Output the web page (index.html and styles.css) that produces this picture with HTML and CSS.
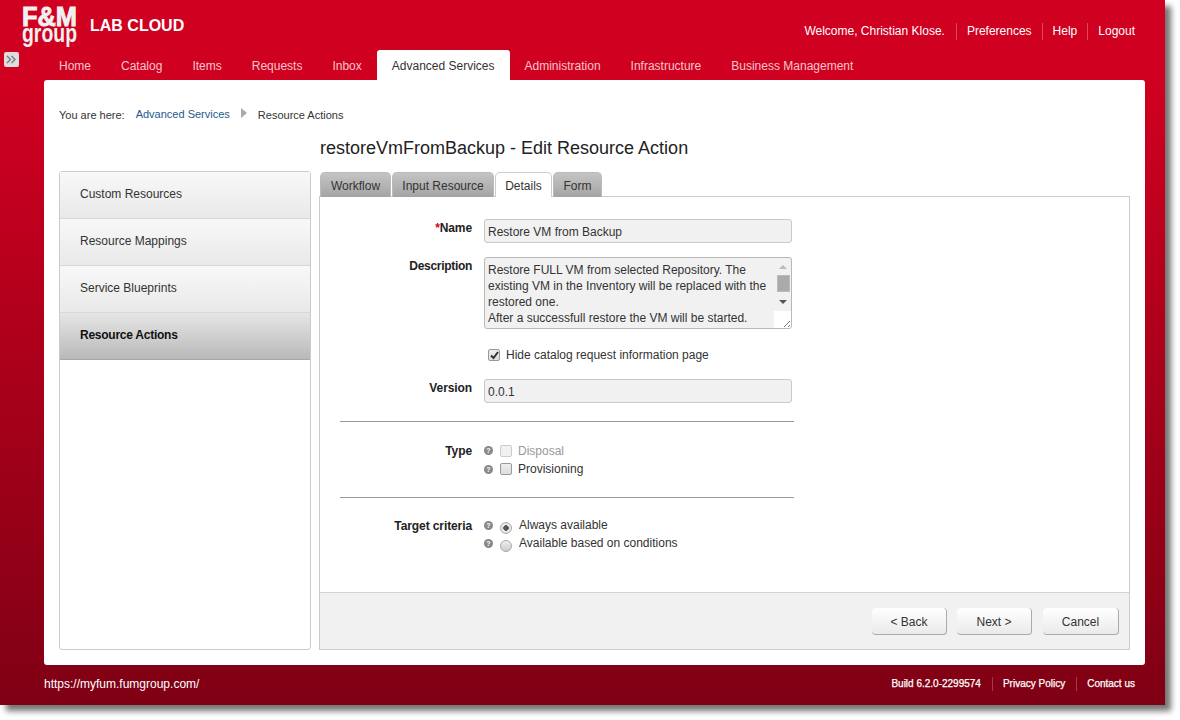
FILE: index.html
```html
<!DOCTYPE html>
<html>
  <head>
    <meta charset="utf-8">
    <title>restoreVmFromBackup - Edit Resource Action</title>
    <link rel="stylesheet" href="styles.css">
  </head>
  <body>
    <div class="window">
      <div class="top">
        <svg class="logo" width="56" height="46" viewBox="0 0 56 46">
          <text class="logo-fm" x="0" y="23" textLength="55" lengthAdjust="spacingAndGlyphs">F&amp;M</text>
          <text class="logo-group" x="0" y="39" textLength="55" lengthAdjust="spacingAndGlyphs">group</text>
        </svg>
        <div class="brand">LAB CLOUD</div>
        <ul class="user">
          <li>Welcome, Christian Klose.</li>
          <li>Preferences</li>
          <li>Help</li>
          <li>Logout</li>
        </ul>
      </div>
      <div class="expander">
        <svg width="11" height="9" viewBox="0 0 11 9"><path d="M1 1l3.500 3.500-3.500 3.500M5.500 1l3.500 3.500-3.500 3.500" fill="none" stroke="#777" stroke-width="1.300"/></svg>
      </div>
      <ul class="nav">
        <li>Home</li>
        <li>Catalog</li>
        <li>Items</li>
        <li>Requests</li>
        <li>Inbox</li>
        <li class="current">Advanced Services</li>
        <li>Administration</li>
        <li>Infrastructure</li>
        <li>Business Management</li>
      </ul>
      <div class="panel">
        <div class="crumbs">
          <span>You are here:</span>
          <a href="#">Advanced Services</a>
          <i class="crumb-arrow"></i>
          <span>Resource Actions</span>
        </div>
        <div class="columns">
          <div class="side-col">
            <ul class="side">
              <li>Custom Resources</li>
              <li>Resource Mappings</li>
              <li>Service Blueprints</li>
              <li class="current">Resource Actions</li>
            </ul>
          </div>
          <div class="main">
            <h1>restoreVmFromBackup - Edit Resource Action</h1>
            <ul class="tabs">
              <li class="t1">Workflow</li>
              <li class="t2">Input Resource</li>
              <li class="t3 current">Details</li>
              <li class="t4">Form</li>
            </ul>
            <div class="box">
              <div class="form">
                <div class="row row-name">
                  <label><b class="req">*</b>Name</label>
                  <div class="field">Restore VM from Backup</div>
                </div>
                <div class="row row-desc">
                  <label>Description</label>
                  <div class="area">
                    <div class="area-text">Restore FULL VM from selected Repository. The existing VM in the Inventory will be replaced with the restored one.<br>After a successfull restore the VM will be started.</div>
                    <div class="scroll">
                      <i class="up"></i>
                      <i class="thumb"></i>
                      <i class="down"></i>
                      <div class="grip">
                        <svg width="8" height="8" viewBox="0 0 8 8"><path d="M1 7l6-6M5 7l2-2" stroke="#777" fill="none"/></svg>
                      </div>
                    </div>
                  </div>
                </div>
                <div class="row row-hide">
                  <label></label>
                  <span class="check checked">
                    <svg width="9" height="9" viewBox="0 0 9 9"><path d="M1 4.500l2.500 2.500 4.500-6" stroke="#333" stroke-width="2" fill="none"/></svg>
                  </span>
                  <span>Hide catalog request information page</span>
                </div>
                <div class="row row-version">
                  <label>Version</label>
                  <div class="field">0.0.1</div>
                </div>
                <hr class="rule rule-one">
                <div class="row row-opt row-type">
                  <label>Type</label>
                  <i class="help">?</i>
                  <span class="check disabled"></span>
                  <span class="muted">Disposal</span>
                </div>
                <div class="row row-opt">
                  <label></label>
                  <i class="help">?</i>
                  <span class="check"></span>
                  <span>Provisioning</span>
                </div>
                <hr class="rule rule-two">
                <div class="row row-opt row-target">
                  <label>Target criteria</label>
                  <i class="help">?</i>
                  <span class="radio on"></span>
                  <span class="radio-label">Always available</span>
                </div>
                <div class="row row-opt">
                  <label></label>
                  <i class="help help-up">?</i>
                  <span class="radio"></span>
                  <span class="radio-label">Available based on conditions</span>
                </div>
              </div>
              <div class="actions">
                <button>&lt; Back</button>
                <button>Next &gt;</button>
                <button class="cancel">Cancel</button>
              </div>
            </div>
          </div>
        </div>
      </div>
      <div class="bottom">
        <span class="url">https://myfum.fumgroup.com/</span>
        <ul class="legal">
          <li>Build 6.2.0-2299574</li>
          <li>Privacy Policy</li>
          <li>Contact us</li>
        </ul>
      </div>
    </div>
  </body>
</html>
```
FILE: styles.css
```css
html, body {
  margin: 0;
  padding: 0;
  background-color: #fff;
  height: 100%;
  overflow: hidden;
}
body {
  font-family: "Liberation Sans", Arial, sans-serif;
  font-size: 12px;
  color: #333;
}
ul {
  list-style: none;
  margin: 0;
  padding: 0;
}
.window {
  position: relative;
  width: 1165px;
  height: 705px;
  display: flex;
  flex-direction: column;
  background: linear-gradient(#d00020 0, #d00020 80px, #7f0014 100%);
  box-shadow: 6px 6px 6px rgba(0, 0, 0, .55);
}
.top {
  height: 50px;
  display: flex;
  align-items: flex-start;
  padding: 0 30px 0 22px;
  color: #fff;
}
.logo {
  flex: none;
  margin-top: 3px;
  overflow: visible;
  fill: #f0f0f0;
  font-weight: bold;
}
.logo-fm {
  font-size: 28.500px;
  stroke: #f0f0f0;
  stroke-width: 1px;
}
.logo-group {
  font-size: 25px;
}
.brand {
  margin: 17px 0 0 12px;
  font-size: 16px;
  line-height: 18px;
  font-weight: bold;
}
.user {
  margin: 23px 0 0 auto;
  display: flex;
  line-height: 17px;
}
.user li {
  padding: 0 10px;
  border-left: 1px solid #e0445a;
}
.user li:first-child {
  border-left: 0;
  padding-right: 11px;
}
.user li:last-child {
  padding-right: 0;
}
.expander {
  position: absolute;
  left: 4px;
  top: 52px;
  width: 15px;
  height: 15px;
  display: flex;
  align-items: center;
  justify-content: center;
  background: #ddd;
  border-radius: 2px;
}
.nav {
  height: 30px;
  display: flex;
  padding-left: 44px;
  line-height: 32px;
  color: #f7c6cd;
}
.nav li {
  padding: 0 15px;
}
.nav .current {
  background: #fff;
  color: #333;
  border-radius: 3px 3px 0 0;
}
.panel {
  width: 1101px;
  height: 585px;
  box-sizing: border-box;
  margin-left: 44px;
  padding: 0 15px 15px;
  display: flex;
  flex-direction: column;
  background: #fff;
  border-radius: 3px;
}
.crumbs {
  height: 48px;
  padding-top: 28px;
  box-sizing: border-box;
  display: flex;
  font-size: 11px;
  line-height: 14px;
}
.crumbs a {
  margin: -1px 0 0 11px;
  color: #1d5a8c;
  text-decoration: none;
}
.crumb-arrow {
  width: 0;
  height: 0;
  margin: 0 11px;
  border-left: 6px solid #aaa;
  border-top: 5px solid transparent;
  border-bottom: 5px solid transparent;
}
.columns {
  flex: 1;
  display: flex;
  gap: 8px;
  min-height: 0;
}
.side-col {
  width: 252px;
  margin-top: 43px;
  box-sizing: border-box;
  border: 1px solid #ccc;
  border-radius: 3px;
}
.side li {
  height: 47px;
  box-sizing: border-box;
  padding-left: 20px;
  line-height: 44px;
  background: linear-gradient(#f8f8f8, #e9e9e9);
  border-bottom: 1px solid #d8d8d8;
}
.side .current {
  background: linear-gradient(#e6e6e6, #b9b9b9);
  border-bottom-color: #a8a8a8;
  color: #111;
  font-weight: bold;
  letter-spacing: -.25px;
}
.main {
  flex: 1;
  display: flex;
  flex-direction: column;
}
h1 {
  margin: 0 0 0 1px;
  height: 44px;
  padding-top: 10px;
  box-sizing: border-box;
  font-size: 18px;
  line-height: 20px;
  font-weight: normal;
  color: #222;
}
.tabs {
  height: 25px;
  display: flex;
  margin: 0 0 -1px 1px;
  position: relative;
  z-index: 1;
}
.tabs li {
  box-sizing: border-box;
  text-align: center;
  line-height: 27px;
  margin-right: 1px;
  background: linear-gradient(#c4c4c4, #a4a4a4);
  border: 1px solid #bbb;
  border-bottom: 0;
  border-radius: 5px 5px 0 0;
}
.tabs .t1 { width: 71px; }
.tabs .t2 { width: 102px; margin-right: 1px; }
.tabs .t3 { width: 57px; }
.tabs .t4 { width: 49px; }
.tabs .current {
  background: #fff;
  border-color: #ccc;
}
.box {
  flex: 1;
  width: 811px;
  box-sizing: border-box;
  display: flex;
  flex-direction: column;
  border: 1px solid #ccc;
}
.form {
  flex: 1;
  padding: 0 20px;
}
.row {
  display: flex;
  align-items: center;
}
.row label {
  width: 132px;
  flex: none;
  margin-right: 12px;
  text-align: right;
  font-weight: bold;
  color: #222;
  letter-spacing: -.1px;
}
.req {
  color: #d00020;
}
.field {
  width: 308px;
  height: 24px;
  box-sizing: border-box;
  padding-left: 3px;
  line-height: 25px;
  background: #f1f1f1;
  border: 1px solid #c8c8c8;
  border-radius: 3px;
}
.row-name {
  margin-top: 22px;
}
.row-name label, .row-version label, .row-desc label {
  align-self: flex-start;
  padding-top: 2px;
}
.row-desc {
  margin-top: 14px;
}
.row-desc label {
  letter-spacing: -.3px;
}
.area {
  width: 308px;
  height: 72px;
  box-sizing: border-box;
  display: flex;
  background: #f1f1f1;
  border: 1px solid #b8b8b8;
  border-radius: 3px;
}
.area-text {
  flex: 1;
  padding: 4px 0 0 3px;
  line-height: 16px;
}
.scroll {
  width: 17px;
  flex: none;
  display: flex;
  flex-direction: column;
  align-items: center;
}
.up, .down {
  width: 0;
  height: 0;
  margin-left: 1px;
  border-left: 4px solid transparent;
  border-right: 4px solid transparent;
}
.up {
  margin-top: 7px;
  border-bottom: 4px solid #bbb;
}
.thumb {
  width: 13px;
  height: 17px;
  margin: 6px 0 0 1px;
  background: #aaa;
  border: 1px solid #bbb;
  box-sizing: border-box;
}
.down {
  margin-top: 8px;
  border-top: 4px solid #555;
}
.grip {
  width: 17px;
  height: 17px;
  margin-top: auto;
  box-sizing: border-box;
  display: flex;
  align-items: flex-end;
  justify-content: flex-end;
  background: #fff;
  border-radius: 0 0 3px 0;
}
.row-hide {
  margin-top: 18px;
  height: 16px;
}
.row-hide .check {
  margin-left: 4px;
  margin-right: 6px;
}
.check {
  width: 12px;
  height: 12px;
  flex: none;
  box-sizing: border-box;
  display: flex;
  align-items: center;
  justify-content: center;
  background: linear-gradient(#eee, #ddd);
  border: 1px solid #999;
  border-radius: 2px;
}
.check.disabled {
  background: #f1f1f1;
  border-color: #ccc;
}
.row-version {
  margin-top: 16px;
}
.rule {
  width: 454px;
  height: 1px;
  margin: 0;
  border: 0;
  background: #999;
}
.rule-one {
  margin-top: 18px;
}
.rule-two {
  margin-top: 19px;
}
.row-opt {
  height: 18px;
}
.help {
  width: 9px;
  height: 9px;
  flex: none;
  margin: 0 7px 0 0;
  border-radius: 50%;
  background: #888;
  color: #fff;
  font: bold 7px/9px "Liberation Sans", sans-serif;
  text-align: center;
}
.row-target .help, .help-up {
  margin-top: -2px;
}
.row-opt .check {
  margin-right: 6px;
}
.row-opt.row-type {
  height: 19px;
  margin-top: 19px;
}
.muted {
  color: #999;
}
.row-target {
  margin-top: 19px;
}
.radio {
  width: 12px;
  height: 12px;
  flex: none;
  box-sizing: border-box;
  margin: 4px 7px 0 0;
  border: 1px solid #aaa;
  border-radius: 50%;
  background: linear-gradient(#eee, #ccc);
}
.radio.on {
  background: radial-gradient(circle, #555 0, #555 2.500px, #e8e8e8 3px);
}
.radio-label {
  margin-top: -2px;
}
.actions {
  height: 57px;
  box-sizing: border-box;
  display: flex;
  padding: 15px 10px 0 0;
  justify-content: flex-end;
  gap: 10px;
  background: #f1f1f1;
  border-top: 1px solid #d4d4d4;
}
.actions button {
  width: 75px;
  height: 27px;
  padding: 2px 0 0;
  font: 12px "Liberation Sans", sans-serif;
  color: #333;
  background: linear-gradient(#fff, #eaeaea);
  border: 0;
  border-radius: 4px;
  border-right: 1px solid #aaa;
  border-bottom: 1px solid #aaa;
}
.actions .cancel {
  width: 76px;
  margin-left: 1px;
}
.bottom {
  flex: 1;
  display: flex;
  align-items: center;
  justify-content: space-between;
  padding: 0 30px 2px 44px;
  color: #fff;
}
.legal {
  display: flex;
  font-size: 10px;
  line-height: 14px;
  -webkit-text-stroke: .25px #fff;
}
.legal li {
  padding: 0 11px 0 10px;
  border-left: 1px solid #a53a48;
}
.legal li:first-child {
  border-left: 0;
}
.legal li:last-child {
  padding-right: 0;
}
```
